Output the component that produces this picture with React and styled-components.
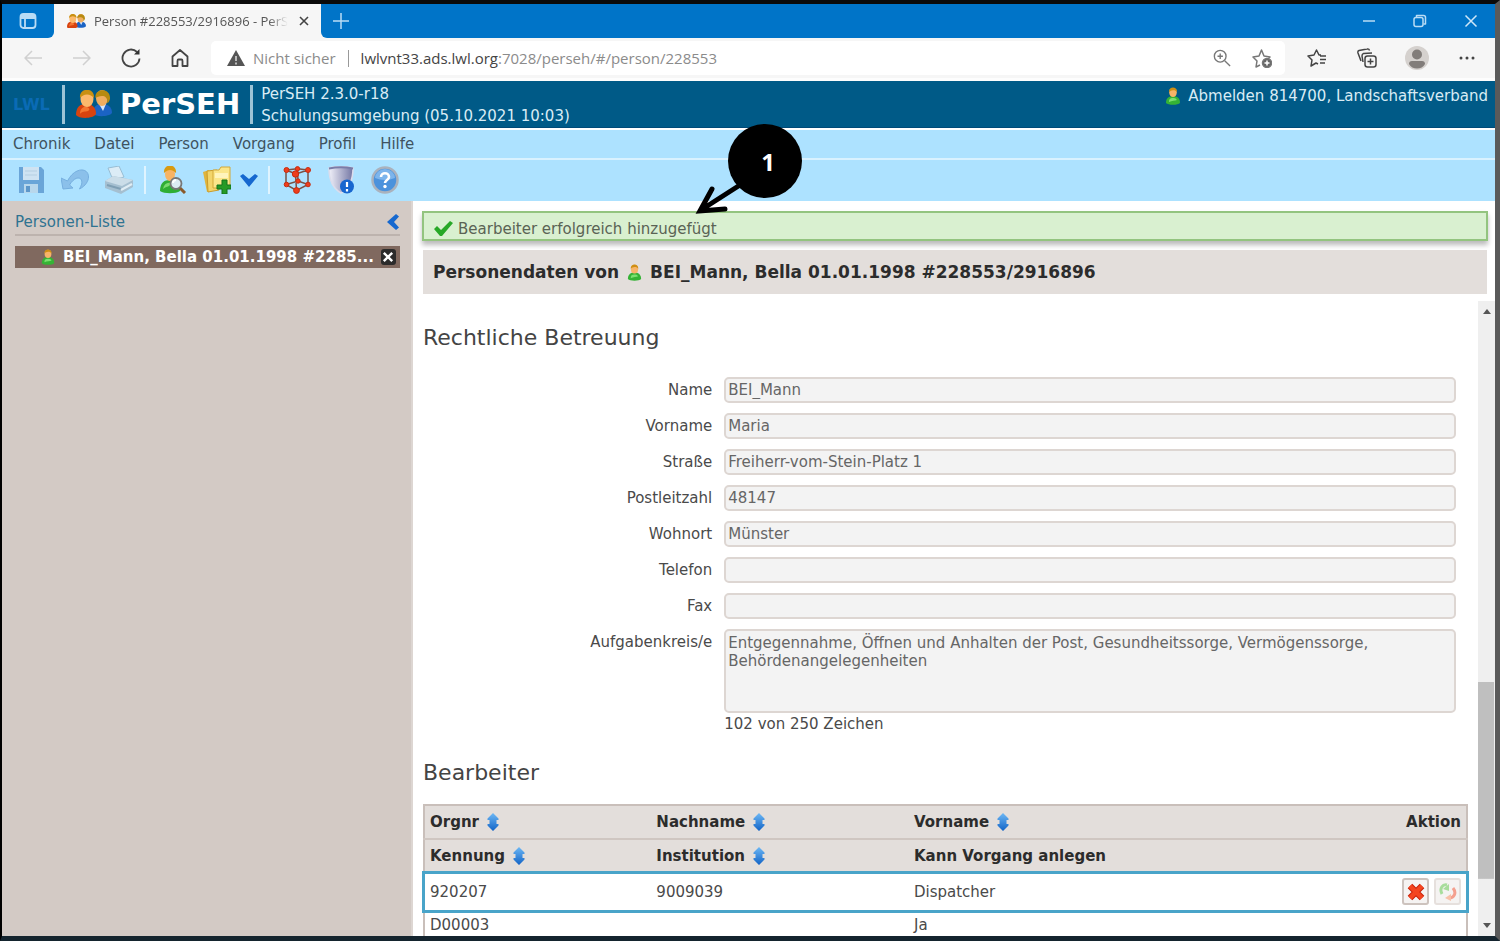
import React, { useState } from 'react'
import styled, { createGlobalStyle } from 'styled-components'

const GlobalStyle = createGlobalStyle`
    * { box-sizing: border-box; }
    body {
        margin: 0;
        background: #8d8d8d;
        font-family: "DejaVu Sans", Verdana, sans-serif;
        font-size: 15px;
        color: #4a4a4a;
    }
    button, input, textarea { font: inherit; color: inherit; }
    h1, h2, p { margin: 0; }
    a { color: inherit; text-decoration: none; }
    svg { display: block; flex: none; }
`

const Frame = styled.div`
    position: relative;
    display: flex;
    flex-direction: column;
    height: 100vh;
    border: 2px solid #000;
    border-width: 4px 5px 5px 2px;
    border-color: #0a0a0a #5a5a5a #14242e #000;
    overflow: hidden;
    background: #fff;
`
const IconButton = styled.button`
    display: flex;
    align-items: center;
    justify-content: center;
    width: ${(p) => p.$width || 24}px;
    padding: 0;
    border: 0;
    background: none;
    cursor: pointer;
`

/* browser window */
const TabBar = styled.div`
    display: flex;
    height: 34px;
    background: #f6f6f6;
    font-family: "Open Sans", "Segoe UI", sans-serif;
`
const TabStart = styled.div`
    display: flex;
    justify-content: center;
    width: 52px;
    background: #0074c8;
    border-bottom-right-radius: 6px;
`
const Tab = styled.div`
    display: flex;
    align-items: center;
    gap: 8px;
    width: 267px;
    padding: 0 10px 0 13px;
`
const TabTitle = styled.span`
    flex: 1;
    white-space: nowrap;
    font-size: 13px;
    color: #555;
    mask-image: linear-gradient(to right, #000 90%, transparent);
`
const TabEnd = styled.div`
    display: flex;
    flex: 1;
    justify-content: space-between;
    padding: 0 12px 0 8px;
    background: #0074c8;
    border-bottom-left-radius: 6px;
`
const WindowControls = styled.div`
    display: flex;
    gap: 27px;
`
const AddressBar = styled.div`
    display: flex;
    align-items: center;
    height: 43px;
    padding: 0 16px 0 19px;
    background: #f6f6f6;
    border-bottom: 3px solid #fdfdfd;
`
const NavButtons = styled.div`
    display: flex;
    gap: 25px;
    margin-right: 19px;
`
const Address = styled.div`
    display: flex;
    flex: 1;
    align-items: center;
    height: 34px;
    padding: 0 11px 0 16px;
    background: #fff;
    border-radius: 5px;
    font-family: "Open Sans", "Segoe UI", sans-serif;
    font-size: 15px;
    color: #8b8b8b;
    white-space: nowrap;
`
const Insecure = styled.span`
    margin: 0 12px 0 8px;
`
const AddressDivider = styled.span`
    width: 1px;
    height: 17px;
    margin-right: 12px;
    background: #999;
`
const Url = styled.span`
    flex: 1;
    b { font-weight: 400; color: #444; }
`
const AddressActions = styled.div`
    display: flex;
    gap: 16px;
`
const BrowserActions = styled.div`
    display: flex;
    gap: 26px;
    margin-left: 20px;
`

/* application header */
const Header = styled.header`
    display: flex;
    align-items: center;
    height: 47px;
    padding: 0 7px 0 11px;
    background: #005a87;
    border-bottom: 1px solid #004a78;
    color: #d9ecf5;
`
const Lwl = styled.span`
    width: 49px;
    font-size: 16px;
    font-weight: 700;
    color: #0a6bb5;
`
const HeaderDivider = styled.span`
    width: 3px;
    height: 39px;
    background: #9cc3d6;
`
const Brand = styled.h1`
    margin: 0 10px 0 8px;
    font-size: 29px;
    line-height: 40px;
    color: #fff;
`
const BrandIcon = styled.span`
    margin-left: 11px;
`
const Version = styled.p`
    flex: 1;
    margin-left: 8px;
    padding-top: 2px;
    line-height: 22px;
    white-space: nowrap;
`
const Logout = styled.a`
    display: flex;
    align-items: center;
    align-self: flex-start;
    gap: 6px;
    margin-top: 6px;
    white-space: nowrap;
`
const Menu = styled.nav`
    display: flex;
    align-items: center;
    gap: 24px;
    height: 30px;
    padding: 0 0 1px 11px;
    background: #ade2ff;
    border-top: 2px solid #fff;
    color: #3f5360;
`
const Toolbar = styled.div`
    display: flex;
    align-items: center;
    height: 43px;
    padding: 0 0 2px 15px;
    background: #ade2ff;
    border-top: 2px solid #d9f2ff;
`
const ToolGroup = styled.div`
    display: flex;
    gap: 16px;
    & + & {
        margin-left: 11px;
        padding-left: 13px;
        border-left: 2px solid #dff4ff;
    }
`
const SplitButton = styled.div`
    display: flex;
    gap: 10px;
`

/* columns */
const Columns = styled.div`
    display: flex;
    flex: 1;
    min-height: 0;
`
const Sidebar = styled.aside`
    width: 411px;
    padding: 9px 11px 9px 13px;
    background: #d3cac5;
    border-right: 2px solid #ddd6d2;
`
const SidebarTitle = styled.div`
    display: flex;
    align-items: center;
    justify-content: space-between;
    height: 26px;
    margin-bottom: 10px;
    border-bottom: 2px solid #bdb3ae;
    color: #2f7391;
`
const PersonEntry = styled.div`
    display: flex;
    align-items: center;
    gap: 7px;
    height: 22px;
    padding: 0 4px 0 25px;
    background: #80695f;
    color: #fff;
    font-weight: 700;
    white-space: nowrap;
    a { flex: 1; }
`
const CloseButton = styled.button`
    display: flex;
    align-items: center;
    justify-content: center;
    width: 16px;
    height: 16px;
    padding: 0;
    border: 0;
    border-radius: 3px;
    background: #2b2b2b;
`
const Main = styled.main`
    display: flex;
    flex: 1;
    flex-direction: column;
    min-width: 0;
    padding: 10px 0 0 9px;
`
const Message = styled.div`
    display: flex;
    align-items: center;
    gap: 5px;
    height: 30px;
    margin-right: 7px;
    padding: 5px 10px 0;
    background: #d9f0d0;
    border: 2px solid #93c47f;
    box-shadow: 0 4px 5px #bbb;
    color: #5a6355;
`
const PersonTitle = styled.div`
    display: flex;
    align-items: center;
    gap: 7px;
    height: 44px;
    margin: 9px 8px 7px 1px;
    padding: 0 10px;
    background: #e3dedb;
    font-size: 17px;
    font-weight: 700;
    color: #2c2c2c;
    white-space: nowrap;
`
const ScrollArea = styled.div`
    display: flex;
    flex: 1;
    min-height: 0;
`
const ScrollContent = styled.div`
    flex: 1;
    min-width: 0;
    padding: 21px 10px 0 1px;
    overflow: hidden;
`
const Scrollbar = styled.div`
    display: flex;
    flex-direction: column;
    align-items: center;
    justify-content: space-between;
    width: 17px;
    padding: 7px 0;
    background: linear-gradient(#bfbfbf, #bfbfbf) 0 87% / 16px 31% no-repeat #efefef;
`
const SectionTitle = styled.h2`
    font-size: 22px;
    font-weight: 400;
    line-height: 32px;
    color: #444;
`
const Fields = styled.form`
    display: grid;
    gap: 10px;
    margin: 23px 12px 21px 0;
`
const Field = styled.div`
    display: grid;
    grid-template-columns: 28% 1fr;
    column-gap: 12px;
    label {
        line-height: 26px;
        text-align: right;
    }
`
const Input = styled.input`
    width: 100%;
    height: 26px;
    padding: 0 2px;
    border: 2px solid #ddd6d2;
    border-radius: 5px;
    background: #f3f3f3;
    color: #666;
    outline: 0;
`
const TextArea = styled.textarea`
    display: block;
    width: 100%;
    height: 84px;
    padding: 3px 2px;
    border: 2px solid #ddd6d2;
    border-radius: 5px;
    background: #f3f3f3;
    line-height: 18px;
    color: #666;
    resize: none;
    outline: 0;
`
const Count = styled.p`
    line-height: 23px;
`
const Table = styled.table`
    width: 100%;
    margin-top: 15px;
    border: 2px solid #c9bfba;
    border-collapse: collapse;
    table-layout: fixed;
    th, td {
        padding: 0 5px;
        text-align: left;
    }
    th {
        height: 34px;
        background: #e3dedb;
        border-bottom: 2px solid #cfc6c1;
        color: #2c2c2c;
    }
    td { height: 28px; }
    th:last-child, td:last-child { text-align: right; }
`
const Col = styled.col`
    width: ${(p) => p.$width};
`
const ActiveRow = styled.tr`
    outline: 3px solid #49a4c9;
    outline-offset: -1px;
    td { height: 38px; padding-bottom: 2px; }
`
const HeadCell = styled.span`
    display: inline-flex;
    align-items: center;
    gap: 8px;
`
const Actions = styled.div`
    display: flex;
    justify-content: flex-end;
    gap: 5px;
`
const ActionButton = styled.button`
    display: flex;
    align-items: center;
    justify-content: center;
    width: 27px;
    height: 27px;
    padding: 0;
    border: 2px solid ${(p) => (p.disabled ? '#e6e0dd' : '#cdc3be')};
    border-radius: 3px;
    background: #f5f3f2;
`

/* numbered pointer over the page */
const Callout = styled.div`
    position: absolute;
    left: 690px;
    top: 120px;
    width: 112px;
    height: 92px;
    svg { position: absolute; inset: 0; }
    span {
        position: absolute;
        left: 39px;
        top: 0;
        width: 74px;
        text-align: center;
        font: 700 24px/76px "Open Sans", sans-serif;
        color: #fff;
    }
`

const PersonIcon = ({ size = 18 }) => (
    <svg width={size} height={size} viewBox="0 0 18 18">
        <path d="M2 16c0-5 3-7 7-7s7 2 7 7c-2 2.400-12 2.400-14 0z" fill="#35b335" />
        <path d="M5 15c0-3 1-4 4-4s3 1 4 2c-2 1-5 .5-8 2z" fill="#7be070" />
        <ellipse cx="9" cy="5.500" rx="3.800" ry="4.600" fill="#f7b468" />
        <path d="M5 5c-.5-6 8.500-6 8 0-1-1.500-2.500-2-4-1.800S6 4 5 5z" fill="#cf8f13" />
    </svg>
)

const PeopleIcon = ({ width = 36 }) => (
    <svg width={width} height={width * 28 / 36} viewBox="0 0 36 28">
        <path d="M17 24c0-7 3-10 9-10s10 3 10 9c-3 4-16 4-19 1z" fill="#1b63c4" />
        <path d="M23 14l4 7 3-7z" fill="#d9e8fa" />
        <ellipse cx="26" cy="8" rx="6" ry="8" fill="#f0ad60" />
        <path d="M19.500 8C18-2 35-3 34 9c-1 3-2 4-3 4 1-4-1-7-5-7-3 0-5 1-6.500 2z" fill="#b78a10" />
        <path d="M0 25c0-8 4-11 10-11s10 3 10 10c-3 5-17 5-20 1z" fill="#d8430f" />
        <path d="M4 24c0-5 3-8 7-7 3 1 3 3 1 4-3 1-6 0-8 3z" fill="#f4752f" />
        <ellipse cx="11" cy="9" rx="6.500" ry="8" fill="#fcb96c" />
        <path d="M4 8C3-3 19-3 18 8c-2-2-4-3.500-7-3.500S6 6 4 8z" fill="#c99012" />
    </svg>
)

const StrokeIcon = ({ size = 20, color = '#444', width = 1.5, children }) => (
    <svg width={size} height={size} viewBox="0 0 20 20" fill="none" stroke={color} strokeWidth={width} strokeLinejoin="round">
        {children}
    </svg>
)

const SortIcon = () => (
    <svg width="12" height="18" viewBox="0 0 12 18">
        <defs>
            <linearGradient id="sort" x1="0" y1="0" x2="0" y2="1">
                <stop offset="0" stopColor="#6db8f5" />
                <stop offset="1" stopColor="#1263c6" />
            </linearGradient>
        </defs>
        <path d="M6 0l5.500 5.500v1.500H9.500v4h2v1.500L6 18 .5 12.500V11h2V7h-2V5.500z" fill="url(#sort)" />
    </svg>
)

const SaveIcon = () => (
    <svg width="28" height="28" viewBox="0 0 28 28">
        <path d="M2 1h22l3 3v23H2z" fill="#6aa5d8" />
        <path d="M6 1h16v13H6z" fill="#cfe3f2" />
        <path d="M8 5h12M8 9h12" stroke="#b5cfe2" />
        <path d="M7 18h14v9H7z" fill="#b8d7ec" />
        <path d="M9 20h4v6H9z" fill="#5d97ca" />
    </svg>
)

const UndoIcon = () => (
    <svg width="28" height="28" viewBox="0 0 28 28">
        <path d="M0 12l2 11 10-1-3.500-3c4-7 10-9 12-5 1 3 0 5-2 9 6-3 9-8 9-12 0-10-14-10-21 4z" fill="#8bc0ea" stroke="#76afdf" />
    </svg>
)

const PrintIcon = () => (
    <svg width="30" height="28" viewBox="0 0 30 28">
        <path d="M4 2l11-2 5 11-11 3z" fill="#dcecf6" stroke="#98bdd4" />
        <path d="M1 15l8-5 20 4v7l-12 7L1 22z" fill="#a5bfd0" />
        <path d="M1 15l8-5 20 4-11 6z" fill="#cbdde8" />
        <path d="M3 19l14 4" stroke="#7f9fb4" strokeWidth="2" />
        <path d="M17 24l11-6" stroke="#e0edf4" strokeWidth="2" />
    </svg>
)

const FindPersonIcon = () => (
    <svg width="28" height="28" viewBox="0 0 28 28">
        <path d="M1 25c0-8 4-11 10-11s10 4 10 11c-4 3-16 3-20 0z" fill="#2fae34" />
        <path d="M4 23c1-5 4-7 8-6-1 4-4 3-8 6z" fill="#7adb70" />
        <ellipse cx="11" cy="8" rx="5" ry="7" fill="#f8b465" />
        <path d="M5 7C4-3 18-3 17 7c-2-2-4-3-6-3S7 5 5 7z" fill="#d99a10" />
        <path d="M20 21l6 6" stroke="#8a5a2c" strokeWidth="3" />
        <circle cx="17" cy="17.500" r="5.500" fill="#dcebf2" stroke="#777" strokeWidth="1.800" />
        <path d="M14 17c0-2 1-3 3-3" stroke="#fff" strokeWidth="2" fill="none" />
    </svg>
)

const FolderAddIcon = () => (
    <svg width="28" height="28" viewBox="0 0 28 28">
        <path d="M0 6l6-2 3 20-5 2z" fill="#e0b43c" />
        <path d="M4 5l10-1 2 20-11 2z" fill="#f3d56a" stroke="#c99b2b" />
        <path d="M10 4h6l2-3h9v21H10z" fill="#fbe68a" stroke="#d2a838" />
        <path d="M12 7h13v5H12z" fill="#fff4bd" />
        <path d="M19 14h5v5h4v4h-4v5h-5v-5h-5v-4h5z" fill="#269a26" stroke="#13721a" />
    </svg>
)

const CubeIcon = () => (
    <svg width="28" height="28" viewBox="0 0 28 28" stroke="#7a5146" strokeWidth="1.500" fill="none">
        <path d="M3 4l10 4 12-4-10.500-1.200zM3 4v14.500l10.500 6L25 18.500V4M12.500 8l1 16M3.500 18.500L15 15l10 3.500M14.500 3L15 15" />
        <g fill="#ee3d1c" stroke="#c72c10" strokeWidth="1">
            <circle cx="3.500" cy="4" r="2.500" />
            <circle cx="14.500" cy="2.800" r="2.200" />
            <circle cx="25" cy="4" r="2.500" />
            <circle cx="12.500" cy="8" r="3.200" />
            <circle cx="15" cy="15" r="2.200" />
            <circle cx="3.500" cy="18.500" r="2.300" />
            <circle cx="25" cy="18.500" r="2.300" />
            <circle cx="13.500" cy="24.500" r="2.900" />
        </g>
    </svg>
)

const ShieldIcon = () => (
    <svg width="28" height="28" viewBox="0 0 28 28">
        <defs>
            <linearGradient id="shield" x1="0" y1="0" x2="1" y2="0">
                <stop offset="0" stopColor="#f0f0f9" />
                <stop offset="1" stopColor="#7376a3" />
            </linearGradient>
        </defs>
        <path d="M2 2q12-3 24 0c0 12-3 20-12 25C5 22 2 14 2 2z" fill="url(#shield)" stroke="#dcddec" strokeWidth="1.500" />
        <path d="M2 2.500q12-2.500 24 0" stroke="#7a7da8" strokeWidth="1.800" fill="none" />
        <circle cx="20" cy="20.500" r="7" fill="#1766cf" />
        <path d="M20 16v5M20 23v2.500" stroke="#fff" strokeWidth="2.200" />
    </svg>
)

const HelpIcon = () => (
    <svg width="28" height="28" viewBox="0 0 28 28">
        <circle cx="14" cy="14" r="12.500" fill="#4b92dc" stroke="#aab2bd" strokeWidth="2.500" />
        <path d="M4 12a10 9 0 0 1 20 0q-10 4-20 0z" fill="#7db5ec" />
        <path d="M10 11c0-5 8-5 8 0 0 3-4 3-4 6" fill="none" stroke="#fff" strokeWidth="2.600" />
        <circle cx="14" cy="20.500" r="1.700" fill="#fff" />
    </svg>
)

const person = { label: 'BEI_Mann, Bella 01.01.1998 #228553/2916896' }
const menuItems = ['Chronik', 'Datei', 'Person', 'Vorgang', 'Profil', 'Hilfe']
const fields = [
    ['name', 'Name', 'BEI_Mann'],
    ['vorname', 'Vorname', 'Maria'],
    ['strasse', 'Straße', 'Freiherr-vom-Stein-Platz 1'],
    ['plz', 'Postleitzahl', '48147'],
    ['wohnort', 'Wohnort', 'Münster'],
    ['telefon', 'Telefon', ''],
    ['fax', 'Fax', ''],
]

const Browser = () => (
    <>
        <TabBar>
            <TabStart>
                <IconButton aria-label="Tabs">
                    <StrokeIcon color="#b9dcf5" width={1.8}>
                        <rect x="2.500" y="3" width="15" height="14" rx="3" />
                        <path d="M2.500 7h15M7 7v10" />
                        <path d="M3 5h14" strokeWidth="3" />
                    </StrokeIcon>
                </IconButton>
            </TabStart>
            <Tab>
                <PeopleIcon width={19} />
                <TabTitle>Person #228553/2916896 - PerS</TabTitle>
                <IconButton $width={16} aria-label="Tab schließen">
                    <StrokeIcon size={16}><path d="M5 5l10 10M15 5L5 15" strokeWidth="2" /></StrokeIcon>
                </IconButton>
            </Tab>
            <TabEnd>
                <IconButton aria-label="Neuer Tab">
                    <StrokeIcon color="#b9dcf5"><path d="M10 2v16M2 10h16" /></StrokeIcon>
                </IconButton>
                <WindowControls>
                    <IconButton aria-label="Minimieren">
                        <StrokeIcon color="#b9dcf5"><path d="M4 10h12" /></StrokeIcon>
                    </IconButton>
                    <IconButton aria-label="Verkleinern">
                        <StrokeIcon color="#b9dcf5">
                            <rect x="4" y="6.500" width="9" height="9" rx="2" />
                            <path d="M6.500 6V4.500h7q2 0 2 2v6.500h-2" />
                        </StrokeIcon>
                    </IconButton>
                    <IconButton aria-label="Schließen">
                        <StrokeIcon color="#cfe7f8"><path d="M4.500 4.500l11 11M15.500 4.500l-11 11" /></StrokeIcon>
                    </IconButton>
                </WindowControls>
            </TabEnd>
        </TabBar>
        <AddressBar>
            <NavButtons>
                <IconButton aria-label="Zurück">
                    <StrokeIcon color="#d0d0d0"><path d="M19 10H2M9 3l-7 7 7 7" /></StrokeIcon>
                </IconButton>
                <IconButton aria-label="Vorwärts">
                    <StrokeIcon color="#d0d0d0"><path d="M1 10h17M11 3l7 7-7 7" /></StrokeIcon>
                </IconButton>
                <IconButton aria-label="Neu laden">
                    <StrokeIcon width={1.8}>
                        <path d="M18.500 10.500A8.500 8.500 0 1 1 16 4" />
                        <path d="M18.500 1v5.500H13z" fill="#333" stroke="none" />
                    </StrokeIcon>
                </IconButton>
                <IconButton aria-label="Startseite">
                    <StrokeIcon width={1.8}>
                        <path d="M2.500 8.500L10 2l7.500 6.500V18h-5v-5q0-1.500-1-1.500h-3q-1 0-1 1.500v5h-5z" />
                    </StrokeIcon>
                </IconButton>
            </NavButtons>
            <Address>
                <svg width="18" height="18" viewBox="0 0 18 18">
                    <path d="M9 1l9 16H0z" fill="#555" />
                    <path d="M9 7v5M9 13.500v2" stroke="#ddd" strokeWidth="1.500" />
                </svg>
                <Insecure>Nicht sicher</Insecure>
                <AddressDivider />
                <Url><b>lwlvnt33.ads.lwl.org</b>:7028/perseh/#/person/228553</Url>
                <AddressActions>
                    <IconButton aria-label="Zoom">
                        <StrokeIcon size={18} color="#777">
                            <circle cx="8" cy="8" r="6.500" />
                            <path d="M8 5v6M5 8h6M13 13l6 6" />
                        </StrokeIcon>
                    </IconButton>
                    <IconButton aria-label="Zu Favoriten hinzufügen">
                        <StrokeIcon color="#777">
                            <path d="M8 17l-4 2 1-6-4-4 6-1 2.500-6L12 8l6 1-2 2" />
                            <circle cx="15" cy="15" r="4.500" fill="#666" />
                            <path d="M15 12.500v5M12.500 15h5" stroke="#fff" />
                        </StrokeIcon>
                    </IconButton>
                </AddressActions>
            </Address>
            <BrowserActions>
                <IconButton aria-label="Favoriten">
                    <StrokeIcon>
                        <path d="M11 16l-2-1-5 3 1-6-4-4 6-1 2.500-5L12 7h2M13 8h6M13 11.500h6M13 15h5" />
                    </StrokeIcon>
                </IconButton>
                <IconButton aria-label="Sammlungen">
                    <StrokeIcon>
                        <path d="M4 13l-3-8q-.5-2 1-2.500L10 1q2-.5 2.500 1.500" />
                        <path d="M6 14l-1-6q0-2 1.500-2.500L15 5" />
                        <rect x="8" y="8" width="11" height="11" rx="2.500" />
                        <path d="M13.500 10.500v6M10.500 13.500h6" />
                    </StrokeIcon>
                </IconButton>
                <IconButton aria-label="Profil">
                    <svg width="24" height="24" viewBox="0 0 24 24">
                        <circle cx="12" cy="12" r="12" fill="#d5d1ce" />
                        <circle cx="12" cy="8.500" r="5" fill="#827d7a" />
                        <path d="M4 18q0-3 3-3h10q3 0 3 3c-3 6-13 6-16 0z" fill="#827d7a" />
                    </svg>
                </IconButton>
                <IconButton aria-label="Einstellungen">
                    <svg width="18" height="18" viewBox="0 0 18 18" fill="#444">
                        <circle cx="3" cy="9" r="1.500" />
                        <circle cx="9" cy="9" r="1.500" />
                        <circle cx="15" cy="9" r="1.500" />
                    </svg>
                </IconButton>
            </BrowserActions>
        </AddressBar>
    </>
)

const Tools = () => (
    <Toolbar>
        <ToolGroup>
            <IconButton $width={28} aria-label="Speichern"><SaveIcon /></IconButton>
            <IconButton $width={28} aria-label="Rückgängig"><UndoIcon /></IconButton>
            <IconButton $width={28} aria-label="Drucken"><PrintIcon /></IconButton>
        </ToolGroup>
        <ToolGroup>
            <IconButton $width={28} aria-label="Person suchen"><FindPersonIcon /></IconButton>
            <SplitButton>
                <IconButton $width={28} aria-label="Vorgang anlegen"><FolderAddIcon /></IconButton>
                <IconButton $width={16} aria-label="Weitere">
                    <svg width="18" height="14" viewBox="0 0 18 14">
                        <path d="M0 3l3-2 6 5 6-5 3 2-9 11z" fill="#1668cf" />
                    </svg>
                </IconButton>
            </SplitButton>
        </ToolGroup>
        <ToolGroup>
            <IconButton $width={28} aria-label="Struktur"><CubeIcon /></IconButton>
            <IconButton $width={28} aria-label="Datenschutz"><ShieldIcon /></IconButton>
            <IconButton $width={28} aria-label="Hilfe"><HelpIcon /></IconButton>
        </ToolGroup>
    </Toolbar>
)

const Editors = () => (
    <Table>
        <colgroup>
            <Col $width="21.8%" />
            <Col $width="24.7%" />
            <Col $width="auto" />
            <Col $width="8%" />
        </colgroup>
        <thead>
            <tr>
                <th><HeadCell>Orgnr <SortIcon /></HeadCell></th>
                <th><HeadCell>Nachname <SortIcon /></HeadCell></th>
                <th><HeadCell>Vorname <SortIcon /></HeadCell></th>
                <th>Aktion</th>
            </tr>
            <tr>
                <th><HeadCell>Kennung <SortIcon /></HeadCell></th>
                <th><HeadCell>Institution <SortIcon /></HeadCell></th>
                <th>Kann Vorgang anlegen</th>
                <th />
            </tr>
        </thead>
        <tbody>
            <ActiveRow>
                <td>920207</td>
                <td>9009039</td>
                <td>Dispatcher</td>
                <td>
                    <Actions>
                        <ActionButton aria-label="Löschen">
                            <svg width="20" height="20" viewBox="0 0 20 20">
                                <path d="M4 4l12 12M16 4L4 16" stroke="#c9210a" strokeWidth="6.500" />
                                <path d="M4 4l12 12M16 4L4 16" stroke="#f4451f" strokeWidth="4.500" />
                            </svg>
                        </ActionButton>
                        <ActionButton aria-label="Ersetzen" disabled>
                            <svg width="18" height="20" viewBox="0 0 18 20" fill="none" strokeWidth="3">
                                <path d="M3 12C0 6 4 2 8 3" stroke="#a8dd9c" />
                                <path d="M10 2v7l-6-2z" fill="#a8dd9c" />
                                <path d="M14 6c4 5 1 10-4 10" stroke="#f4a08f" />
                                <path d="M12 12v7l-6-3z" fill="#f8c0a8" />
                            </svg>
                        </ActionButton>
                    </Actions>
                </td>
            </ActiveRow>
            <tr>
                <td>D00003</td>
                <td />
                <td>Ja</td>
                <td />
            </tr>
        </tbody>
    </Table>
)

const App = () => {
    const [task, setTask] = useState('Entgegennahme, Öffnen und Anhalten der Post, Gesundheitssorge, Vermögenssorge, Behördenangelegenheiten')

    return (
        <Frame>
            <GlobalStyle />
            <Browser />
            <Header>
                <Lwl>LWL</Lwl>
                <HeaderDivider />
                <BrandIcon><PeopleIcon /></BrandIcon>
                <Brand>PerSEH</Brand>
                <HeaderDivider />
                <Version>PerSEH 2.3.0-r18<br />Schulungsumgebung (05.10.2021 10:03)</Version>
                <Logout href="#logout"><PersonIcon /> Abmelden 814700, Landschaftsverband</Logout>
            </Header>
            <Menu>
                {menuItems.map((item) => <a key={item} href={'#' + item}>{item}</a>)}
            </Menu>
            <Tools />
            <Columns>
                <Sidebar>
                    <SidebarTitle>
                        Personen-Liste
                        <IconButton $width={14} aria-label="Einklappen">
                            <svg width="12" height="16" viewBox="0 0 12 16">
                                <path d="M9 0l3 2.500L7 8l5 5.500L9 16 0 8z" fill="#1668cf" />
                            </svg>
                        </IconButton>
                    </SidebarTitle>
                    <PersonEntry>
                        <PersonIcon size={16} />
                        <a href="#person">BEI_Mann, Bella 01.01.1998 #2285...</a>
                        <CloseButton aria-label="Person schließen">
                            <StrokeIcon size={12} color="#fff" width={4}><path d="M3 3l14 14M17 3L3 17" /></StrokeIcon>
                        </CloseButton>
                    </PersonEntry>
                </Sidebar>
                <Main>
                    <Message role="status">
                        <svg width="19" height="15" viewBox="0 0 19 15">
                            <path d="M0 8l3-3 4 4 9-9 3 2L8 15H6z" fill="#27a827" />
                        </svg>
                        Bearbeiter erfolgreich hinzugefügt
                    </Message>
                    <PersonTitle>
                        Personendaten von <PersonIcon size={17} /> {person.label}
                    </PersonTitle>
                    <ScrollArea>
                        <ScrollContent>
                            <SectionTitle>Rechtliche Betreuung</SectionTitle>
                            <Fields>
                                {fields.map(([id, label, value]) => (
                                    <Field key={id}>
                                        <label htmlFor={id}>{label}</label>
                                        <Input id={id} defaultValue={value} readOnly />
                                    </Field>
                                ))}
                                <Field>
                                    <label htmlFor="aufgaben">Aufgabenkreis/e</label>
                                    <div>
                                        <TextArea id="aufgaben" value={task} onChange={(e) => setTask(e.target.value)} />
                                        <Count>{task.length} von 250 Zeichen</Count>
                                    </div>
                                </Field>
                            </Fields>
                            <SectionTitle>Bearbeiter</SectionTitle>
                            <Editors />
                        </ScrollContent>
                        <Scrollbar>
                            <svg width="8" height="6" viewBox="0 0 8 6"><path d="M0 6l4-5 4 5z" fill="#555" /></svg>
                            <svg width="8" height="6" viewBox="0 0 8 6"><path d="M0 0l4 5 4-5z" fill="#555" /></svg>
                        </Scrollbar>
                    </ScrollArea>
                </Main>
            </Columns>
            <Callout>
                <svg width="112" height="92" viewBox="0 0 112 92">
                    <circle cx="73" cy="37" r="37" />
                    <path d="M48 61L9 86M20 65L8 87l25-2" fill="none" stroke="#000" strokeWidth="5" strokeLinecap="round" />
                </svg>
                <span>1</span>
            </Callout>
        </Frame>
    )
}

export default App
